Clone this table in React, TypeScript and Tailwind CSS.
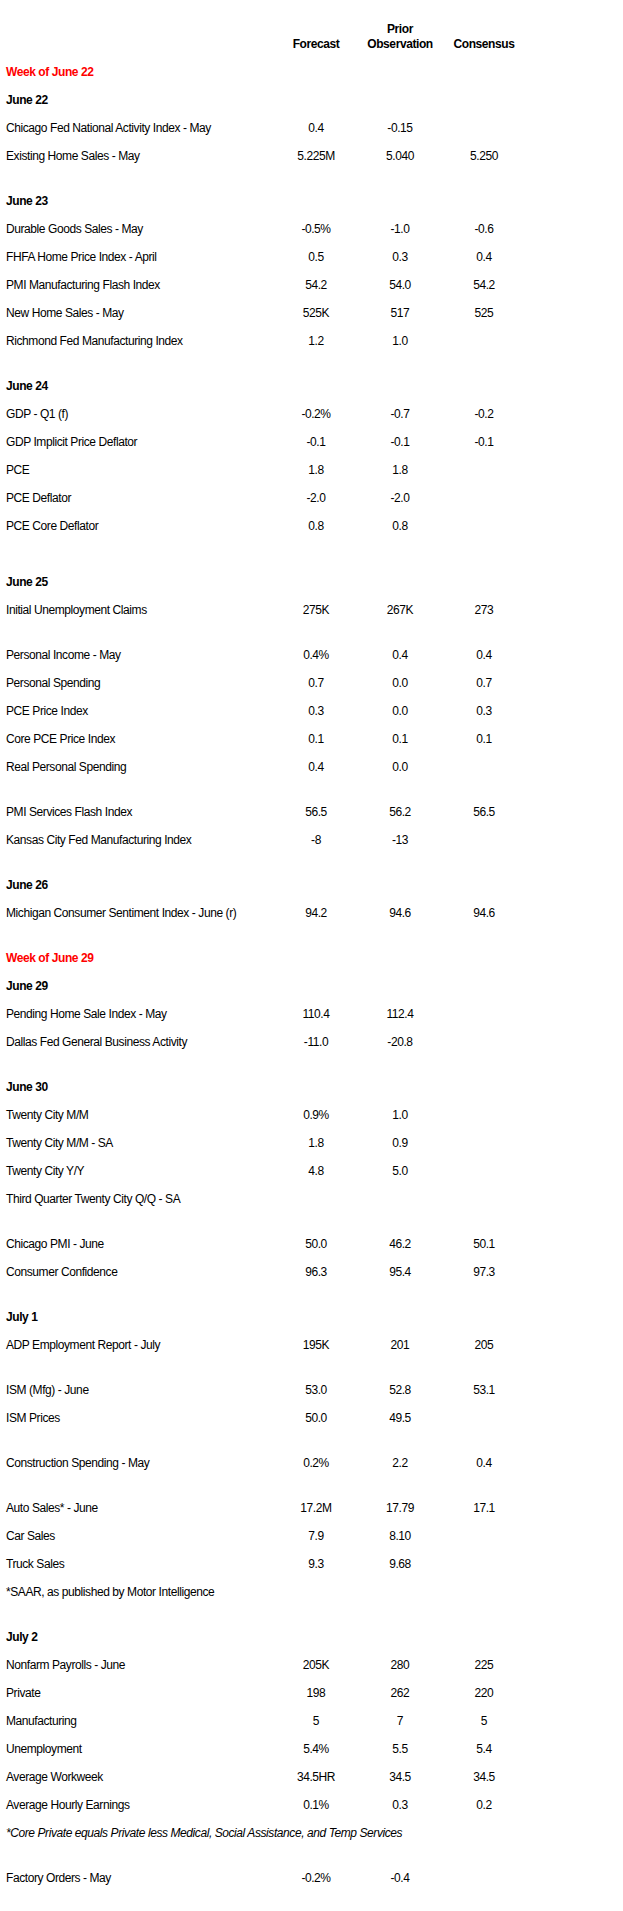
import React from 'react';

type Entry =
    | { kind: 'week'; text: string }
    | { kind: 'day'; text: string }
    | { kind: 'row'; label: string; f?: string; p?: string; c?: string }
    | { kind: 'note'; text: string; italic?: boolean }
    | { kind: 'gap' }
    | { kind: 'blank' };

const r = (label: string, f = '', p = '', c = ''): Entry => ({ kind: 'row', label, f, p, c });
const gap: Entry = { kind: 'gap' };

const entries: Entry[] = [
    { kind: 'week', text: 'Week of June 22' },
    { kind: 'day', text: 'June 22' },
    r('Chicago Fed National Activity Index - May', '0.4', '-0.15'),
    r('Existing Home Sales - May', '5.225M', '5.040', '5.250'),
    gap,
    { kind: 'day', text: 'June 23' },
    r('Durable Goods Sales - May', '-0.5%', '-1.0', '-0.6'),
    r('FHFA Home Price Index - April', '0.5', '0.3', '0.4'),
    r('PMI Manufacturing Flash Index', '54.2', '54.0', '54.2'),
    r('New Home Sales - May', '525K', '517', '525'),
    r('Richmond Fed Manufacturing Index', '1.2', '1.0'),
    gap,
    { kind: 'day', text: 'June 24' },
    r('GDP - Q1 (f)', '-0.2%', '-0.7', '-0.2'),
    r('GDP Implicit Price Deflator', '-0.1', '-0.1', '-0.1'),
    r('PCE', '1.8', '1.8'),
    r('PCE Deflator', '-2.0', '-2.0'),
    r('PCE Core Deflator', '0.8', '0.8'),
    { kind: 'blank' },
    { kind: 'day', text: 'June 25' },
    r('Initial Unemployment Claims', '275K', '267K', '273'),
    gap,
    r('Personal Income - May', '0.4%', '0.4', '0.4'),
    r('Personal Spending', '0.7', '0.0', '0.7'),
    r('PCE Price Index', '0.3', '0.0', '0.3'),
    r('Core PCE Price Index', '0.1', '0.1', '0.1'),
    r('Real Personal Spending', '0.4', '0.0'),
    gap,
    r('PMI Services Flash Index', '56.5', '56.2', '56.5'),
    r('Kansas City Fed Manufacturing Index', '-8', '-13'),
    gap,
    { kind: 'day', text: 'June 26' },
    r('Michigan Consumer Sentiment Index - June (r)', '94.2', '94.6', '94.6'),
    gap,
    { kind: 'week', text: 'Week of June 29' },
    { kind: 'day', text: 'June 29' },
    r('Pending Home Sale Index - May', '110.4', '112.4'),
    r('Dallas Fed General Business Activity', '-11.0', '-20.8'),
    gap,
    { kind: 'day', text: 'June 30' },
    r('Twenty City M/M', '0.9%', '1.0'),
    r('Twenty City M/M - SA', '1.8', '0.9'),
    r('Twenty City Y/Y', '4.8', '5.0'),
    r('Third Quarter Twenty City Q/Q - SA'),
    gap,
    r('Chicago PMI - June', '50.0', '46.2', '50.1'),
    r('Consumer Confidence', '96.3', '95.4', '97.3'),
    gap,
    { kind: 'day', text: 'July 1' },
    r('ADP Employment Report - July', '195K', '201', '205'),
    gap,
    r('ISM (Mfg) - June', '53.0', '52.8', '53.1'),
    r('ISM Prices', '50.0', '49.5'),
    gap,
    r('Construction Spending - May', '0.2%', '2.2', '0.4'),
    gap,
    r('Auto Sales* - June', '17.2M', '17.79', '17.1'),
    r('Car Sales', '7.9', '8.10'),
    r('Truck Sales', '9.3', '9.68'),
    { kind: 'note', text: '*SAAR, as published by Motor Intelligence' },
    gap,
    { kind: 'day', text: 'July 2' },
    r('Nonfarm Payrolls - June', '205K', '280', '225'),
    r('Private', '198', '262', '220'),
    r('Manufacturing', '5', '7', '5'),
    r('Unemployment', '5.4%', '5.5', '5.4'),
    r('Average Workweek', '34.5HR', '34.5', '34.5'),
    r('Average Hourly Earnings', '0.1%', '0.3', '0.2'),
    { kind: 'note', text: '*Core Private equals Private less Medical, Social Assistance, and Temp Services', italic: true },
    gap,
    r('Factory Orders - May', '-0.2%', '-0.4'),
];

// label column, then Forecast / Prior Observation / Consensus
const cols = 'grid grid-cols-[268px_84px_84px_84px]';

const EntryLine: React.FC<{ entry: Entry }> = ({ entry }) => {
    switch (entry.kind) {
        case 'gap':
            return <div className="h-[17px]" />;
        case 'blank':
            return <div className="h-[28px]" />;
        case 'week':
            return <div className="h-[28px] flex items-center font-bold text-[#ff0000]">{entry.text}</div>;
        case 'day':
            return <div className="h-[28px] flex items-center font-bold">{entry.text}</div>;
        case 'note':
            return (
                <div className={`h-[28px] flex items-center whitespace-nowrap ${entry.italic ? 'italic' : ''}`}>
                    {entry.text}
                </div>
            );
        default:
            return (
                <div className={`${cols} h-[28px] items-center`}>
                    <span className="whitespace-nowrap">{entry.label}</span>
                    <span className="text-center">{entry.f}</span>
                    <span className="text-center">{entry.p}</span>
                    <span className="text-center">{entry.c}</span>
                </div>
            );
    }
};

export default function App() {
    return (
        <div className="bg-white text-black min-h-[1911px] pl-[6px] pb-[19px] text-[12px] tracking-[-0.035em] font-['Liberation_Sans',Arial,sans-serif]">
            {/* column headings */}
            <div className={`${cols} pt-[22px] pb-[6px] leading-[15px] font-bold items-end`}>
                <span />
                <span className="text-center">Forecast</span>
                <span className="text-center">
                    Prior
                    <br />
                    Observation
                </span>
                <span className="text-center">Consensus</span>
            </div>

            {entries.map((entry, i) => (
                <EntryLine key={i} entry={entry} />
            ))}
        </div>
    );
}
